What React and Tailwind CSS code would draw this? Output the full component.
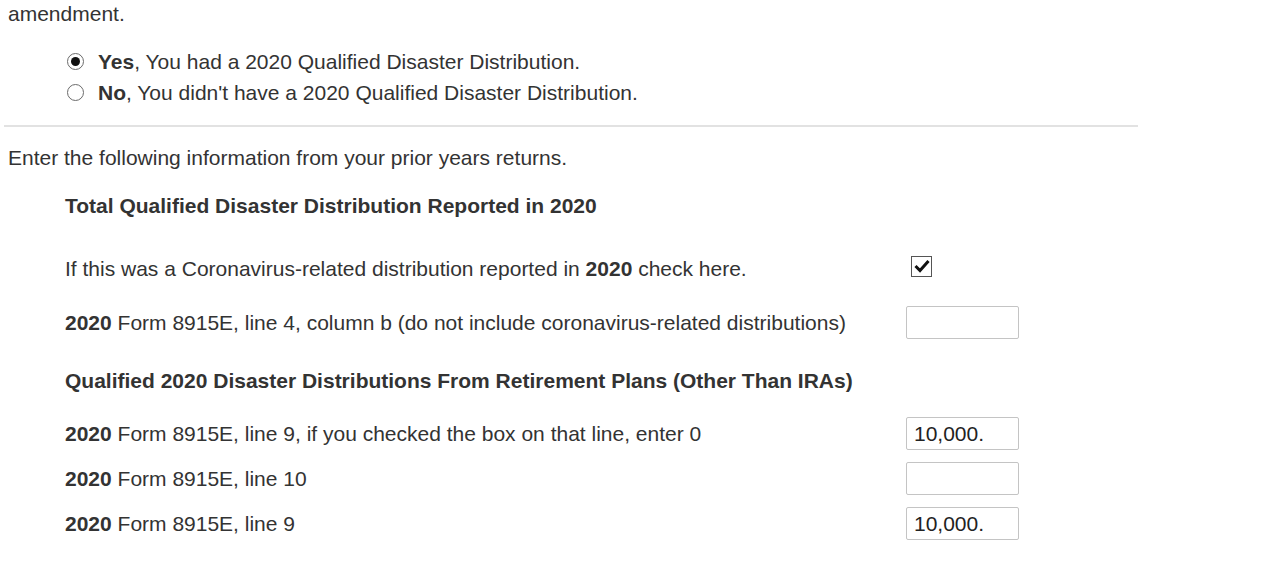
import { useState } from 'react'

function Radio({ checked }) {
  return (
    <span className="flex h-[17px] w-[17px] shrink-0 items-center justify-center rounded-full border border-[#6b6b6b] bg-white">
      {checked && <span className="h-[9px] w-[9px] rounded-full bg-[#111]" />}
    </span>
  )
}

function Checkbox({ checked }) {
  return (
    <span className="flex h-[21px] w-[21px] items-center justify-center border border-[#555] bg-white">
      {checked && (
        <svg width="16" height="14" viewBox="0 0 16 14">
          <path d="M1.5 7 L6 11.5 L14.5 2" fill="none" stroke="#111" strokeWidth="3" />
        </svg>
      )}
    </span>
  )
}

function Amount({ value }) {
  return (
    <div className="flex h-[33px] w-[113px] items-center rounded-[2px] border border-[#c4c4c4] bg-white pl-[7px] text-[#222]">
      {value}
    </div>
  )
}

function Row({ label, children, height = 'h-[45px]' }) {
  return (
    <div className={`flex items-center ${height}`}>
      <div className="w-[906px] shrink-0 pl-[65px]">{label}</div>
      <div className="flex w-[113px] items-center">{children}</div>
    </div>
  )
}

export default function App() {
  const [choice] = useState('yes')

  return (
    <div className="bg-white text-[21px] leading-none text-[#333] [font-family:'Liberation_Sans',Arial,sans-serif]">
      <div className="flex h-[26px] items-center pl-[8px]">amendment.</div>

      <div className="mt-[20px] pl-[67px]">
        <div className="flex h-[31px] items-center gap-[14px]">
          <Radio checked={choice === 'yes'} />
          <span><b>Yes</b>, You had a 2020 Qualified Disaster Distribution.</span>
        </div>
        <div className="flex h-[31px] items-center gap-[14px]">
          <Radio checked={choice === 'no'} />
          <span><b>No</b>, You didn't have a 2020 Qualified Disaster Distribution.</span>
        </div>
      </div>

      <div className="ml-[4px] mt-[17px] w-[1134px] border-t-2 border-[#e2e2e2]" />

      <div className="mt-[16px] flex h-[28px] items-center pl-[8px]">
        Enter the following information from your prior years returns.
      </div>

      <div className="mt-[20px] flex h-[28px] items-center pl-[65px] font-bold">
        Total Qualified Disaster Distribution Reported in 2020
      </div>

      <div className="mt-[22px]">
        <Row
          height="h-[54px]"
          label={<>If this was a Coronavirus-related distribution reported in <b>2020</b> check here.</>}
        >
          <span className="ml-[5px] -mt-[4px]"><Checkbox checked /></span>
        </Row>
        <Row
          height="h-[54px]"
          label={<><b>2020</b> Form 8915E, line 4, column b (do not include coronavirus-related distributions)</>}
        >
          <Amount value="" />
        </Row>
        <div className="flex h-[62px] items-center pl-[65px] font-bold">
          Qualified 2020 Disaster Distributions From Retirement Plans (Other Than IRAs)
        </div>
        <Row label={<><b>2020</b> Form 8915E, line 9, if you checked the box on that line, enter 0</>}>
          <Amount value="10,000." />
        </Row>
        <Row label={<><b>2020</b> Form 8915E, line 10</>}>
          <Amount value="" />
        </Row>
        <Row label={<><b>2020</b> Form 8915E, line 9</>}>
          <Amount value="10,000." />
        </Row>
      </div>
    </div>
  )
}
